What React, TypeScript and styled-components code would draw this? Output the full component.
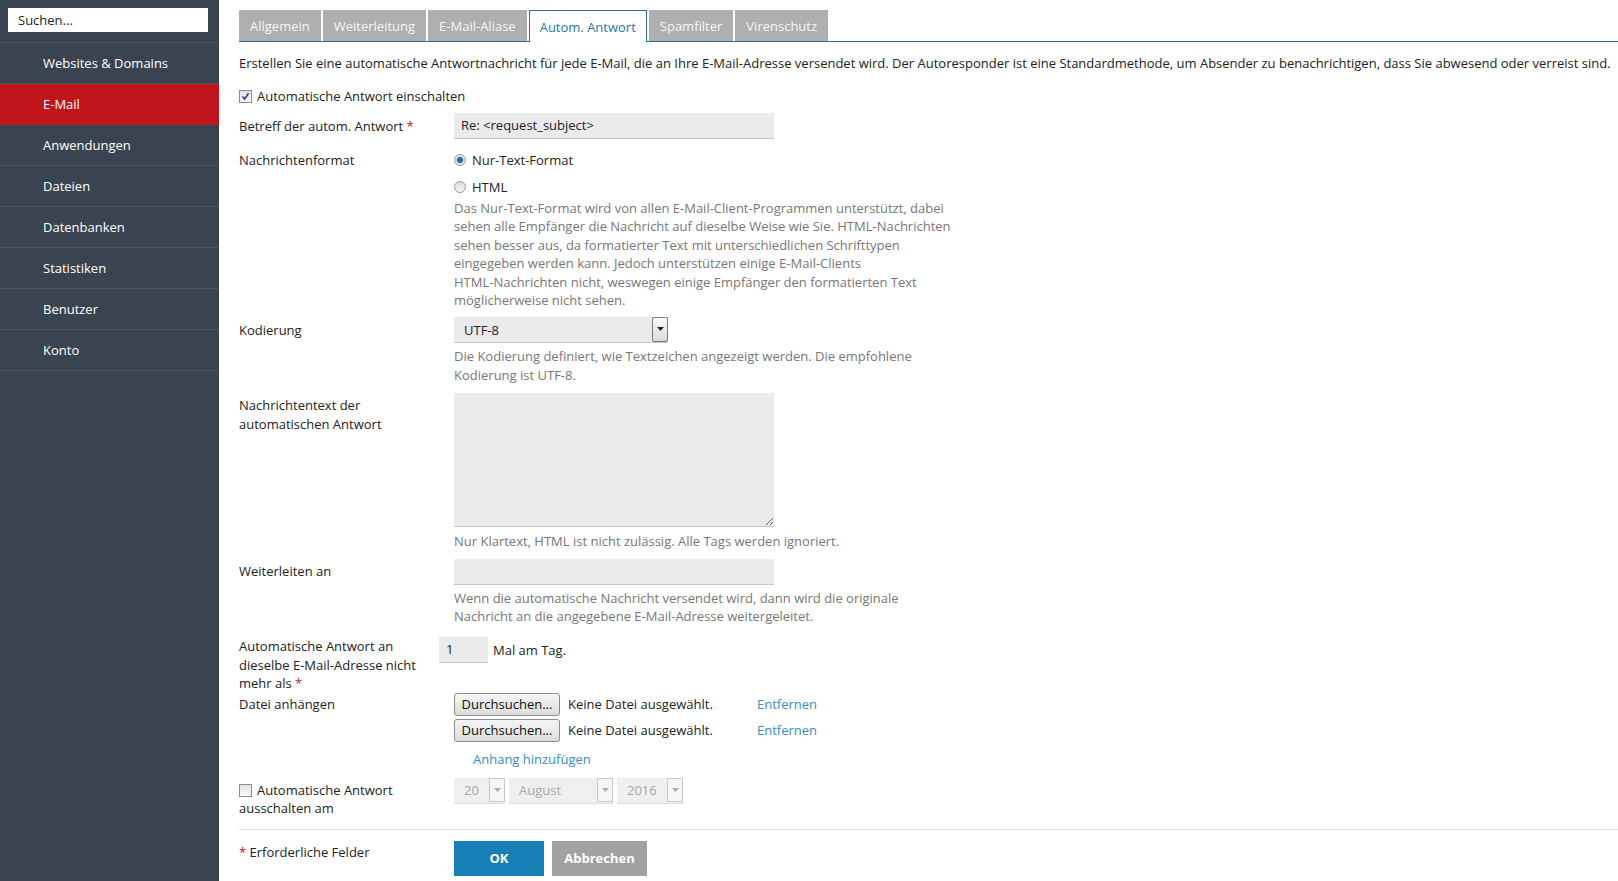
import React from 'react';
import styled, { createGlobalStyle, css } from 'styled-components';

const GlobalStyle = createGlobalStyle`
  html, body {
    margin: 0;
    padding: 0;
    background: #fff;
  }
  body {
    font-family: 'Open Sans', 'DejaVu Sans', sans-serif;
    font-size: 13px;
    color: #222;
  }
`;

const navItems = ['Websites & Domains', 'E-Mail', 'Anwendungen', 'Dateien', 'Datenbanken', 'Statistiken', 'Benutzer', 'Konto'];
const tabs = ['Allgemein', 'Weiterleitung', 'E-Mail-Aliase', 'Autom. Antwort', 'Spamfilter', 'Virenschutz'];

function Checkbox({ checked }: { checked?: boolean }) {
  return (
    <Check>
      {checked && (
        <svg width="9" height="9" viewBox="0 0 9 9">
          <path d="M1.5 4.5 L3.6 7 L7.6 1.2" fill="none" stroke="#2f4f9e" strokeWidth="1.8" />
        </svg>
      )}
    </Check>
  );
}

function Arrow({ disabled }: { disabled?: boolean }) {
  return (
    <ArrowBox disabled={disabled}>
      <svg width="7" height="4" viewBox="0 0 7 4">
        <path d="M0 0 H7 L3.5 4 Z" fill={disabled ? '#aaa' : '#222'} />
      </svg>
    </ArrowBox>
  );
}

export default function App() {
  return (
    <Page>
      <GlobalStyle />
      <Sidebar>
        <SearchWrap>
          <Search defaultValue="" placeholder="Suchen..." />
        </SearchWrap>
        <Nav>
          {navItems.map((item) => (
            <NavItem key={item} active={item === 'E-Mail'}>{item}</NavItem>
          ))}
        </Nav>
      </Sidebar>

      <Main>
        <TabBar>
          {tabs.map((t) => (
            <Tab key={t} active={t === 'Autom. Antwort'}>{t}</Tab>
          ))}
        </TabBar>

        <Intro>
          Erstellen Sie eine automatische Antwortnachricht für jede E-Mail, die an Ihre E-Mail-Adresse versendet wird. Der Autoresponder ist eine Standardmethode, um Absender zu benachrichtigen, dass Sie abwesend oder verreist sind.
        </Intro>

        <CheckRow>
          <Checkbox checked />
          <span>Automatische Antwort einschalten</span>
        </CheckRow>

        <Form>
          <Row mt={8}>
            <Label pt={4}>Betreff der autom. Antwort <Req>*</Req></Label>
            <Field>
              <TextInput w={320}>Re: &lt;request_subject&gt;</TextInput>
            </Field>
          </Row>

          <Row mt={12}>
            <Label>Nachrichtenformat</Label>
            <Field>
              <RadioLine>
                <Radio selected />
                Nur-Text-Format
              </RadioLine>
              <RadioLine mt={9}>
                <Radio />
                HTML
              </RadioLine>
              <Help mt={3}>
                Das Nur-Text-Format wird von allen E-Mail-Client-Programmen unterstützt, dabei sehen alle Empfänger die Nachricht auf dieselbe Weise wie Sie. <NoWrap>HTML-Nachrichten</NoWrap> sehen besser aus, da formatierter Text mit unterschiedlichen Schrifttypen eingegeben werden kann. Jedoch unterstützen einige E-Mail-Clients <NoWrap>HTML-Nachrichten</NoWrap> nicht, weswegen einige Empfänger den formatierten Text möglicherweise nicht sehen.
              </Help>
            </Field>
          </Row>

          <Row mt={8}>
            <Label pt={4}>Kodierung</Label>
            <Field>
              <Select w={214}>
                <span>UTF-8</span>
                <Arrow />
              </Select>
              <Help mt={4}>Die Kodierung definiert, wie Textzeichen angezeigt werden. Die empfohlene Kodierung ist UTF-8.</Help>
            </Field>
          </Row>

          <Row mt={9}>
            <Label pt={3}>Nachrichtentext der automatischen Antwort</Label>
            <Field>
              <TextArea />
              <Help mt={5}>Nur Klartext, HTML ist nicht zulässig. Alle Tags werden ignoriert.</Help>
            </Field>
          </Row>

          <Row mt={8}>
            <Label pt={3}>Weiterleiten an</Label>
            <Field>
              <TextInput w={320} />
              <Help mt={4}>Wenn die automatische Nachricht versendet wird, dann wird die originale Nachricht an die angegebene E-Mail-Adresse weitergeleitet.</Help>
            </Field>
          </Row>

          <Row mt={12}>
            <Label>Automatische Antwort an dieselbe E-Mail-Adresse nicht mehr als <Req>*</Req></Label>
            <Field shift>
              <Inline>
                <TextInput w={49}>1</TextInput>
                <span>Mal am Tag.</span>
              </Inline>
            </Field>
          </Row>

          <Row mt={0}>
            <Label pt={2}>Datei anhängen</Label>
            <Field>
              {[0, 1].map((i) => (
                <FileLine key={i} mt={i ? 3 : 0}>
                  <FileButton>Durchsuchen...</FileButton>
                  <FileName>Keine Datei ausgewählt.</FileName>
                  <Link>Entfernen</Link>
                </FileLine>
              ))}
              <AddLink>Anhang hinzufügen</AddLink>
            </Field>
          </Row>

          <Row mt={10}>
            <Label pt={3}>
              <Checkbox />
              <LabelText>Automatische Antwort ausschalten am</LabelText>
            </Label>
            <Field>
              <Inline gap={4}>
                <Select w={51} disabled>
                  <span>20</span>
                  <Arrow disabled />
                </Select>
                <Select w={104} disabled>
                  <span>August</span>
                  <Arrow disabled />
                </Select>
                <Select w={66} disabled>
                  <span>2016</span>
                  <Arrow disabled />
                </Select>
              </Inline>
            </Field>
          </Row>
        </Form>

        <Footer>
          <Label pt={2}><Req>*</Req> Erforderliche Felder</Label>
          <Field>
            <Inline gap={8}>
              <Button primary>OK</Button>
              <Button>Abbrechen</Button>
            </Inline>
          </Field>
        </Footer>
      </Main>
    </Page>
  );
}

const Page = styled.div`
  display: flex;
  min-height: 881px;
`;

const Sidebar = styled.aside`
  width: 219px;
  flex-shrink: 0;
  background: #3a4450;
`;

const SearchWrap = styled.div`
  padding: 8px 11px 10px 8px;
  border-bottom: 1px solid #4b5560;
`;

const Search = styled.input`
  box-sizing: border-box;
  width: 100%;
  height: 24px;
  border: 0;
  padding: 0 10px;
  font-family: 'Open Sans', sans-serif;
  font-size: 13px;
  color: #222;
  outline: none;

  &::placeholder {
    color: #222;
  }
`;

const Nav = styled.nav`
  display: flex;
  flex-direction: column;
`;

const NavItem = styled.div<{ active?: boolean }>`
  height: 40px;
  line-height: 40px;
  padding-left: 43px;
  color: #fff;
  font-size: 13px;
  border-bottom: 1px solid #4b5560;

  ${({ active }) => active && css`
    background: #c0161b;
    border-bottom-color: #c0161b;
  `}
`;

const Main = styled.main`
  flex: 1;
  padding: 10px 0 0 20px;
  min-width: 0;
`;

const TabBar = styled.div`
  display: flex;
  gap: 2px;
  border-bottom: 1px solid #2f6e93;
  height: 31px;
`;

const Tab = styled.div<{ active?: boolean }>`
  box-sizing: border-box;
  height: 31px;
  padding: 2px 11px 0;
  line-height: 29px;
  background: #afafaf;
  color: #f6f6f6;
  font-size: 13px;

  ${({ active }) => active && css`
    height: 32px;
    background: #fff;
    color: #2a77a8;
    border: 1px solid #2f6e93;
    border-bottom: 0;
    line-height: 28px;
    padding: 2px 10px 0;
  `}
`;

const Intro = styled.p`
  margin: 12px 0 0;
  line-height: 18px;
  white-space: nowrap;
`;

const CheckRow = styled.label`
  display: flex;
  align-items: center;
  gap: 5px;
  margin-top: 15px;
  line-height: 18px;
`;

const Check = styled.span`
  box-sizing: border-box;
  display: inline-flex;
  align-items: center;
  justify-content: center;
  width: 13px;
  height: 13px;
  border: 1px solid #8c8c8c;
  background: linear-gradient(#e4e4e4, #fafafa);
  vertical-align: -2px;
  flex-shrink: 0;
`;

const LabelText = styled.span`
  margin-left: 5px;
`;

const NoWrap = styled.span`
  white-space: nowrap;
`;

const Form = styled.div`
  display: flex;
  flex-direction: column;
`;

const Row = styled.div<{ mt: number }>`
  display: grid;
  grid-template-columns: 200px 1fr;
  margin-top: ${({ mt }) => mt}px;
`;

const Label = styled.div<{ pt?: number }>`
  padding-top: ${({ pt }) => pt || 0}px;
  line-height: 18.4px;
  padding-right: 12px;
`;

const Req = styled.span`
  color: #c0161b;
`;

const Field = styled.div<{ shift?: boolean }>`
  padding-left: ${({ shift }) => (shift ? 0 : 15)}px;
  min-width: 0;
`;

const TextInput = styled.div<{ w: number }>`
  box-sizing: border-box;
  width: ${({ w }) => w}px;
  height: 26px;
  line-height: 25px;
  padding: 0 7px;
  background: #ebebeb;
  border-bottom: 1px solid #c6c6c6;
  color: #222;
  flex-shrink: 0;
`;

const RadioLine = styled.div<{ mt?: number }>`
  display: flex;
  align-items: center;
  gap: 6px;
  line-height: 18px;
  margin-top: ${({ mt }) => mt || 0}px;
`;

const Radio = styled.span<{ selected?: boolean }>`
  box-sizing: border-box;
  width: 12px;
  height: 12px;
  border-radius: 50%;
  border: 1px solid #9a9a9a;
  background: ${({ selected }) =>
    selected
      ? 'radial-gradient(circle, #2a6fae 0 2.6px, #8fb3d6 3.2px, #e9e9e9 3.8px)'
      : 'linear-gradient(#dcdcdc, #f7f7f7)'};
`;

const Help = styled.div<{ mt?: number }>`
  margin-top: ${({ mt }) => mt || 0}px;
  width: 500px;
  line-height: 18.4px;
  color: #777;
`;

const Select = styled.div<{ w: number; disabled?: boolean }>`
  box-sizing: border-box;
  display: flex;
  align-items: center;
  justify-content: space-between;
  width: ${({ w }) => w}px;
  height: 26px;
  padding-left: 10px;
  background: ${({ disabled }) => (disabled ? '#efefef' : '#ebebeb')};
  border-bottom: 1px solid ${({ disabled }) => (disabled ? '#dedede' : '#c6c6c6')};
  color: ${({ disabled }) => (disabled ? '#a8a8a8' : '#222')};
`;

const ArrowBox = styled.span<{ disabled?: boolean }>`
  box-sizing: border-box;
  display: flex;
  align-items: center;
  justify-content: center;
  width: 16px;
  height: ${({ disabled }) => (disabled ? 24 : 25)}px;
  margin-top: ${({ disabled }) => (disabled ? 0 : -1)}px;
  border: 1px solid ${({ disabled }) => (disabled ? '#c8c8c8' : '#7a7a7a')};
  border-radius: ${({ disabled }) => (disabled ? 0 : 2)}px;
  background: ${({ disabled }) => (disabled ? '#f6f6f6' : 'linear-gradient(#fafafa, #dadada)')};
`;

const TextArea = styled.textarea`
  box-sizing: border-box;
  display: block;
  width: 320px;
  height: 134px;
  border: 0;
  border-bottom: 1px solid #c6c6c6;
  background: #ebebeb;
  outline: none;
  font-family: 'Open Sans', sans-serif;
  font-size: 13px;
`;

const Inline = styled.div<{ gap?: number }>`
  display: flex;
  align-items: center;
  gap: ${({ gap }) => (gap === undefined ? 5 : gap)}px;
`;

const FileLine = styled.div<{ mt: number }>`
  display: flex;
  align-items: center;
  margin-top: ${({ mt }) => mt}px;
`;

const FileButton = styled.div`
  box-sizing: border-box;
  width: 106px;
  height: 23px;
  line-height: 21px;
  text-align: center;
  border: 1px solid #8c8c8c;
  border-radius: 3px;
  background: linear-gradient(#f6f6f6, #dcdcdc);
  color: #111;
`;

const FileName = styled.span`
  width: 189px;
  padding-left: 8px;
`;

const Link = styled.span`
  color: #3a8cc4;
`;

const AddLink = styled(Link)`
  display: block;
  margin: 8px 0 0 19px;
  line-height: 18px;
`;

const Footer = styled.div`
  display: grid;
  grid-template-columns: 200px 1fr;
  margin-top: 11px;
  padding-top: 11px;
  border-top: 1px solid #dcdcdc;
`;

const Button = styled.div<{ primary?: boolean }>`
  width: ${({ primary }) => (primary ? 90 : 95)}px;
  height: 35px;
  line-height: 35px;
  text-align: center;
  font-weight: 700;
  color: #fff;
  background: ${({ primary }) => (primary ? '#1680b6' : '#a2a2a2')};
`;
